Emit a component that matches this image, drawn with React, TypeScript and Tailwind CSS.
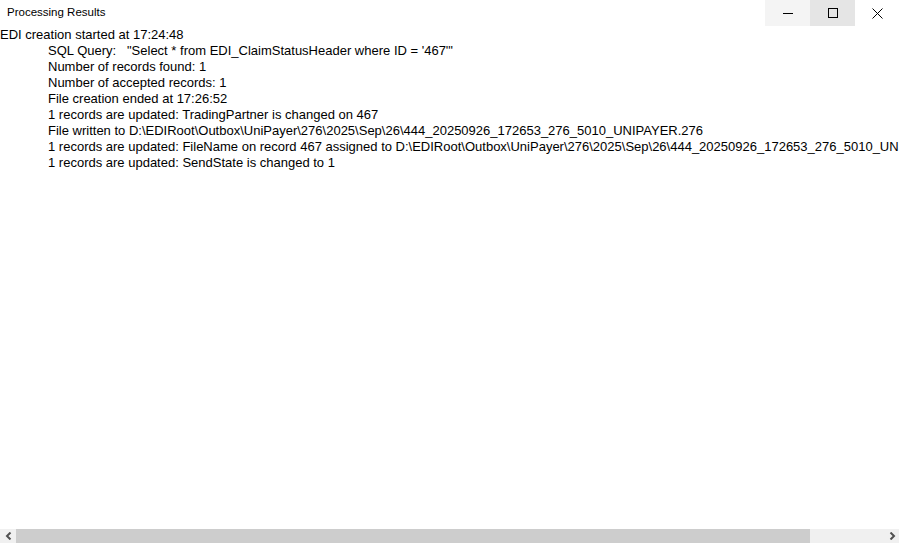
const lines = [
  'SQL Query:   "Select * from EDI_ClaimStatusHeader where ID = \'467\'"',
  'Number of records found: 1',
  'Number of accepted records: 1',
  'File creation ended at 17:26:52',
  '1 records are updated: TradingPartner is changed on 467',
  'File written to D:\\EDIRoot\\Outbox\\UniPayer\\276\\2025\\Sep\\26\\444_20250926_172653_276_5010_UNIPAYER.276',
  '1 records are updated: FileName on record 467 assigned to D:\\EDIRoot\\Outbox\\UniPayer\\276\\2025\\Sep\\26\\444_20250926_172653_276_5010_UNIPAYER.276',
  '1 records are updated: SendState is changed to 1',
];

function TitleBar() {
  return (
    <div className="flex h-[26px] shrink-0 items-stretch bg-white">
      <div className="flex flex-1 items-center pl-[7px] text-[11.5px] text-black">Processing Results</div>
      <button className="flex w-[45px] items-center justify-center bg-[#f4f4f4]">
        <svg width="10" height="10" viewBox="0 0 10 10">
          <path d="M0 5.5h10" stroke="#000" strokeWidth="1" />
        </svg>
      </button>
      <button className="flex w-[45px] items-center justify-center bg-[#e5e5e5]">
        <svg width="10" height="10" viewBox="0 0 10 10">
          <rect x="0.5" y="0.5" width="9" height="9" fill="none" stroke="#000" strokeWidth="1" />
        </svg>
      </button>
      <button className="flex w-[44px] items-center justify-center bg-white">
        <svg width="11" height="11" viewBox="0 0 11 11">
          <path d="M0.5 0.5l10 10M10.5 0.5l-10 10" stroke="#000" strokeWidth="1" />
        </svg>
      </button>
    </div>
  );
}

function HScrollBar() {
  return (
    <div className="flex h-[14px] shrink-0 bg-[#f0f0f0]">
      <div className="flex w-[16px] items-center justify-center">
        <svg width="7" height="8" viewBox="0 0 7 8">
          <path d="M5.5 0.5L2 4L5.5 7.5" fill="none" stroke="#505050" strokeWidth="2" />
        </svg>
      </div>
      <div className="w-[794px] bg-[#cdcdcd]" />
      <div className="flex-1" />
      <div className="flex w-[14px] items-center justify-center">
        <svg width="7" height="8" viewBox="0 0 7 8">
          <path d="M1.5 0.5L5 4L1.5 7.5" fill="none" stroke="#505050" strokeWidth="2" />
        </svg>
      </div>
    </div>
  );
}

export default function App() {
  return (
    <div
      className="flex h-[543px] w-[899px] flex-col overflow-hidden bg-white text-black"
      style={{ fontFamily: '"Liberation Sans", Arial, sans-serif' }}
    >
      <TitleBar />
      <div className="flex-1 overflow-hidden pt-[1px] text-[13px] leading-[16px]">
        <div className="whitespace-pre">EDI creation started at 17:24:48</div>
        {lines.map((line, i) => (
          <div key={i} className="whitespace-pre pl-[48px]">
            {line}
          </div>
        ))}
      </div>
      <div className="h-[3px] shrink-0" />
      <HScrollBar />
    </div>
  );
}
